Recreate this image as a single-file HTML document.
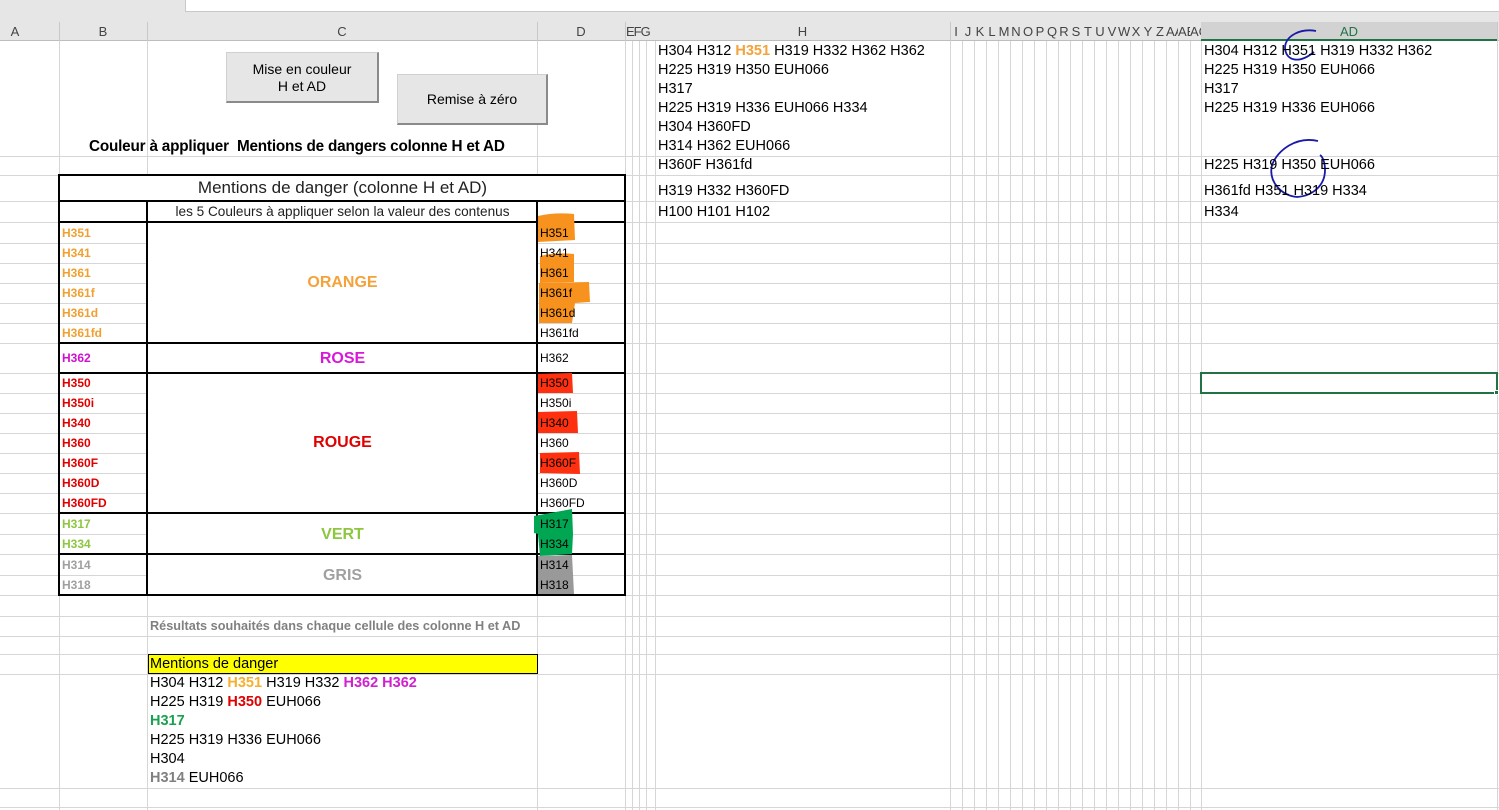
<!DOCTYPE html>
<html><head><meta charset="utf-8"><style>
*{margin:0;padding:0;box-sizing:border-box}
body{width:1499px;height:810px;position:relative;overflow:hidden;background:#fff;font-family:"Liberation Sans",sans-serif;color:#000}
div{position:absolute}
.v{top:41px;height:769px;width:1px;background:#d6d6d6}
.h{left:0;width:1499px;height:1px;background:#d6d6d6}
.hd{top:22px;height:19px;font-size:13px;color:#444;line-height:19px;text-align:center;white-space:nowrap}
.n{top:22px;height:19px;width:12px;font-size:13px;color:#444;line-height:19px;text-align:center;overflow:hidden;white-space:nowrap}
.t{white-space:nowrap;line-height:19px}
.b{font-size:12px;font-weight:bold;left:62px}
.d{font-size:12px;left:540px}
.bk{background:#000}
.r{font-size:14.5px;white-space:nowrap;line-height:19px}
</style></head><body>
<div style="left:0;top:0;width:1499px;height:41px;background:#e6e6e6"></div>
<div style="left:185px;top:0;width:1314px;height:12px;background:#fff;border-bottom:1px solid #c8c8c8;border-left:1px solid #c8c8c8"></div>
<div style="left:0;top:40px;width:1499px;height:1px;background:#bdbdbd"></div>
<div style="left:1201px;top:22px;width:296px;height:19px;background:#d2d2d2;border-bottom:2px solid #217346"></div>
<div style="left:59px;top:22px;width:1px;height:19px;background:#c8c8c8"></div>
<div style="left:147px;top:22px;width:1px;height:19px;background:#c8c8c8"></div>
<div style="left:537px;top:22px;width:1px;height:19px;background:#c8c8c8"></div>
<div style="left:625px;top:22px;width:1px;height:19px;background:#c8c8c8"></div>
<div style="left:950px;top:22px;width:1px;height:19px;background:#c8c8c8"></div>
<div style="left:1497px;top:22px;width:1px;height:19px;background:#c8c8c8"></div>
<div class="hd" style="left:0;width:30px">A</div>
<div class="hd" style="left:59px;width:88px">B</div>
<div class="hd" style="left:147px;width:390px">C</div>
<div class="hd" style="left:537px;width:88px">D</div>
<div class="hd" style="left:626px;width:30px;text-align:left;letter-spacing:-1px">EFG</div>
<div class="hd" style="left:655px;width:295px">H</div>
<div class="n" style="left:950px">I</div><div class="n" style="left:962px">J</div><div class="n" style="left:974px">K</div><div class="n" style="left:986px">L</div><div class="n" style="left:998px">M</div><div class="n" style="left:1010px">N</div><div class="n" style="left:1022px">O</div><div class="n" style="left:1034px">P</div><div class="n" style="left:1046px">Q</div><div class="n" style="left:1058px">R</div><div class="n" style="left:1070px">S</div><div class="n" style="left:1082px">T</div><div class="n" style="left:1094px">U</div><div class="n" style="left:1106px">V</div><div class="n" style="left:1118px">W</div><div class="n" style="left:1130px">X</div><div class="n" style="left:1142px">Y</div><div class="n" style="left:1154px">Z</div><div class="n" style="left:1166px;text-align:left">AA</div><div class="n" style="left:1178px;text-align:left">AB</div><div class="n" style="left:1190px;width:11px;text-align:left">AC</div>
<div class="hd" style="left:1201px;width:296px;color:#217346">AD</div>
<div class="v" style="left:59px"></div><div class="v" style="left:147px"></div><div class="v" style="left:537px"></div><div class="v" style="left:625px"></div><div class="v" style="left:632px"></div><div class="v" style="left:639px"></div><div class="v" style="left:646px"></div><div class="v" style="left:655px"></div><div class="v" style="left:950px"></div><div class="v" style="left:962px"></div><div class="v" style="left:974px"></div><div class="v" style="left:986px"></div><div class="v" style="left:998px"></div><div class="v" style="left:1010px"></div><div class="v" style="left:1022px"></div><div class="v" style="left:1034px"></div><div class="v" style="left:1046px"></div><div class="v" style="left:1058px"></div><div class="v" style="left:1070px"></div><div class="v" style="left:1082px"></div><div class="v" style="left:1094px"></div><div class="v" style="left:1106px"></div><div class="v" style="left:1118px"></div><div class="v" style="left:1130px"></div><div class="v" style="left:1142px"></div><div class="v" style="left:1154px"></div><div class="v" style="left:1166px"></div><div class="v" style="left:1178px"></div><div class="v" style="left:1190px"></div><div class="v" style="left:1201px"></div><div class="v" style="left:1497px"></div>
<div class="h" style="top:156px"></div><div class="h" style="top:175px"></div><div class="h" style="top:201px"></div><div class="h" style="top:222px"></div><div class="h" style="top:243px"></div><div class="h" style="top:263px"></div><div class="h" style="top:283px"></div><div class="h" style="top:303px"></div><div class="h" style="top:323px"></div><div class="h" style="top:343px"></div><div class="h" style="top:373px"></div><div class="h" style="top:393px"></div><div class="h" style="top:413px"></div><div class="h" style="top:433px"></div><div class="h" style="top:453px"></div><div class="h" style="top:473px"></div><div class="h" style="top:493px"></div><div class="h" style="top:513px"></div><div class="h" style="top:534px"></div><div class="h" style="top:554px"></div><div class="h" style="top:575px"></div><div class="h" style="top:595px"></div><div class="h" style="top:616px"></div><div class="h" style="top:636px"></div><div class="h" style="top:654px"></div><div class="h" style="top:674px"></div><div class="h" style="top:788px"></div><div class="h" style="top:807px"></div>
<div style="left:60px;top:176px;width:565px;height:25px;background:#fff"></div>
<div style="left:148px;top:202px;width:389px;height:20px;background:#fff"></div>
<div style="left:148px;top:223px;width:389px;height:120px;background:#fff"></div>
<div style="left:148px;top:344px;width:389px;height:29px;background:#fff"></div>
<div style="left:148px;top:374px;width:389px;height:139px;background:#fff"></div>
<div style="left:148px;top:514px;width:389px;height:40px;background:#fff"></div>
<div style="left:148px;top:555px;width:389px;height:40px;background:#fff"></div>
<div style="left:148px;top:675px;width:389px;height:113px;background:#fff"></div>
<div style="left:1200px;top:372px;width:298px;height:22px;border:2px solid #217346"></div>
<div style="left:1494px;top:390px;width:5px;height:5px;background:#217346;border:1px solid #fff"></div>
<div style="left:226px;top:52px;width:153px;height:51px;background:#e6e6e6;border:1px solid #d0d0d0;border-right:2px solid #8a8a8a;border-bottom:2px solid #8a8a8a;font-size:14px;text-align:center;line-height:17px;padding-top:8px">Mise en couleur<br>H et AD</div>
<div style="left:397px;top:74px;width:151px;height:51px;background:#e6e6e6;border:1px solid #d0d0d0;border-right:2px solid #8a8a8a;border-bottom:2px solid #8a8a8a;font-size:14px;text-align:center;line-height:49px">Remise à zéro</div>
<div class="t" style="left:89px;top:137px;font-size:15.3px;font-weight:bold;letter-spacing:-0.2px">Couleur à appliquer&nbsp; Mentions de dangers colonne H et AD</div>
<div class="bk" style="left:58px;top:174px;width:568px;height:2px"></div>
<div class="bk" style="left:58px;top:200px;width:568px;height:2px"></div>
<div class="bk" style="left:58px;top:221px;width:568px;height:2px"></div>
<div class="bk" style="left:58px;top:342px;width:568px;height:2px"></div>
<div class="bk" style="left:58px;top:372px;width:568px;height:2px"></div>
<div class="bk" style="left:58px;top:512px;width:568px;height:2px"></div>
<div class="bk" style="left:58px;top:553px;width:568px;height:2px"></div>
<div class="bk" style="left:58px;top:594px;width:568px;height:2px"></div>
<div class="bk" style="left:58px;top:174px;width:2px;height:422px"></div>
<div class="bk" style="left:624px;top:174px;width:2px;height:422px"></div>
<div class="bk" style="left:146px;top:200px;width:2px;height:396px"></div>
<div class="bk" style="left:536px;top:200px;width:2px;height:396px"></div>
<div class="t" style="left:60px;width:565px;top:178px;font-size:17px;text-align:center;color:#222">Mentions de danger (colonne H et AD)</div>
<div class="t" style="left:148px;width:389px;top:202px;font-size:13.6px;text-align:center;color:#222">les 5 Couleurs à appliquer selon la valeur des contenus</div>
<svg style="position:absolute;left:0;top:0" width="1499" height="810">
<path d="M538 216 Q555 212 574 214 L575 240 L538 242Z" fill="#f7921e"/>
<path d="M540 256 Q556 252 574 254 L574 282 L540 283Z" fill="#f7921e"/>
<path d="M539 283 L589 282 L590 302 L575 303 L572 323 L539 323Z" fill="#f7921e"/>
<path d="M538 374 L572 373 L573 393 L538 393Z" fill="#ff3010"/>
<path d="M538 412 L577 411 L578 433 L538 433Z" fill="#ff3010"/>
<path d="M540 453 L579 452 L580 474 L540 473Z" fill="#ff3010"/>
<path d="M534 516 L572 509 L573 534 L572 554 L540 556 L538 534 L534 533Z" fill="#00a651"/>
<path d="M538 556 L572 555 L574 594 L538 594Z" fill="#999"/>
<path d="M1316 31 C1300 28 1286 36 1285 47 C1285 60 1298 65 1314 52" fill="none" stroke="#1a1aa8" stroke-width="1.8"/>
<path d="M1318 141 C1296 136 1278 150 1272 165 C1268 182 1282 196 1297 197 C1312 196 1325 186 1325 170 C1325 163 1323 157 1320 155" fill="none" stroke="#1a1aa8" stroke-width="1.8"/>
</svg>
<div class="t b" style="top:224px;color:#f0a030">H351</div>
<div class="t b" style="top:244px;color:#f0a030">H341</div>
<div class="t b" style="top:264px;color:#f0a030">H361</div>
<div class="t b" style="top:284px;color:#f0a030">H361f</div>
<div class="t b" style="top:304px;color:#f0a030">H361d</div>
<div class="t b" style="top:324px;color:#f0a030">H361fd</div>
<div class="t b" style="top:349px;color:#d010d0">H362</div>
<div class="t b" style="top:374px;color:#e00000">H350</div>
<div class="t b" style="top:394px;color:#e00000">H350i</div>
<div class="t b" style="top:414px;color:#e00000">H340</div>
<div class="t b" style="top:434px;color:#e00000">H360</div>
<div class="t b" style="top:454px;color:#e00000">H360F</div>
<div class="t b" style="top:474px;color:#e00000">H360D</div>
<div class="t b" style="top:494px;color:#e00000">H360FD</div>
<div class="t b" style="top:515px;color:#8dc63f">H317</div>
<div class="t b" style="top:535px;color:#8dc63f">H334</div>
<div class="t b" style="top:556px;color:#a0a0a0">H314</div>
<div class="t b" style="top:576px;color:#a0a0a0">H318</div>
<div class="t" style="left:148px;width:389px;top:273px;text-align:center;font-size:16px;font-weight:bold;color:#f4a23a">ORANGE</div>
<div class="t" style="left:148px;width:389px;top:349px;text-align:center;font-size:16px;font-weight:bold;color:#d818d8">ROSE</div>
<div class="t" style="left:148px;width:389px;top:433px;text-align:center;font-size:16px;font-weight:bold;color:#e00000">ROUGE</div>
<div class="t" style="left:148px;width:389px;top:525px;text-align:center;font-size:16px;font-weight:bold;color:#8dc63f">VERT</div>
<div class="t" style="left:148px;width:389px;top:566px;text-align:center;font-size:16px;font-weight:bold;color:#a0a0a0">GRIS</div>
<div class="t d" style="top:224px">H351</div>
<div class="t d" style="top:244px">H341</div>
<div class="t d" style="top:264px">H361</div>
<div class="t d" style="top:284px">H361f</div>
<div class="t d" style="top:304px">H361d</div>
<div class="t d" style="top:324px">H361fd</div>
<div class="t d" style="top:349px">H362</div>
<div class="t d" style="top:374px">H350</div>
<div class="t d" style="top:394px">H350i</div>
<div class="t d" style="top:414px">H340</div>
<div class="t d" style="top:434px">H360</div>
<div class="t d" style="top:454px">H360F</div>
<div class="t d" style="top:474px">H360D</div>
<div class="t d" style="top:494px">H360FD</div>
<div class="t d" style="top:515px">H317</div>
<div class="t d" style="top:535px">H334</div>
<div class="t d" style="top:556px">H314</div>
<div class="t d" style="top:576px">H318</div>
<div class="r" style="left:658px;top:42px">H304 H312 <b style="color:#f4a23a">H351</b> H319 H332 H362 H362<br>H225 H319 H350 EUH066<br>H317<br>H225 H319 H336 EUH066 H334<br>H304 H360FD<br>H314 H362 EUH066</div>
<div class="r" style="left:658px;top:156px">H360F H361fd</div>
<div class="r" style="left:658px;top:182px">H319 H332 H360FD</div>
<div class="r" style="left:658px;top:203px">H100 H101 H102</div>
<div class="r" style="left:1204px;top:42px">H304 H312 H351 H319 H332 H362<br>H225 H319 H350 EUH066<br>H317<br>H225 H319 H336 EUH066</div>
<div class="r" style="left:1204px;top:156px">H225 H319 H350 EUH066</div>
<div class="r" style="left:1204px;top:182px">H361fd H351 H319 H334</div>
<div class="r" style="left:1204px;top:203px">H334</div>
<div class="t" style="left:150px;top:617px;font-size:12.7px;font-weight:bold;color:#808080">Résultats souhaités dans chaque cellule des colonne H et AD</div>
<div style="left:148px;top:654px;width:390px;height:20px;background:#ffff00;border:1px solid #000"></div>
<div class="r" style="left:150px;top:655px">Mentions de danger</div>
<div class="r" style="left:150px;top:674px">H304 H312 <b style="color:#f4b030">H351</b> H319 H332 <b style="color:#d020d0">H362 H362</b><br>H225 H319 <b style="color:#e00000">H350</b> EUH066<br><b style="color:#1aa050">H317</b><br>H225 H319 H336 EUH066<br>H304<br><b style="color:#808080">H314</b> EUH066</div>
</body></html>
